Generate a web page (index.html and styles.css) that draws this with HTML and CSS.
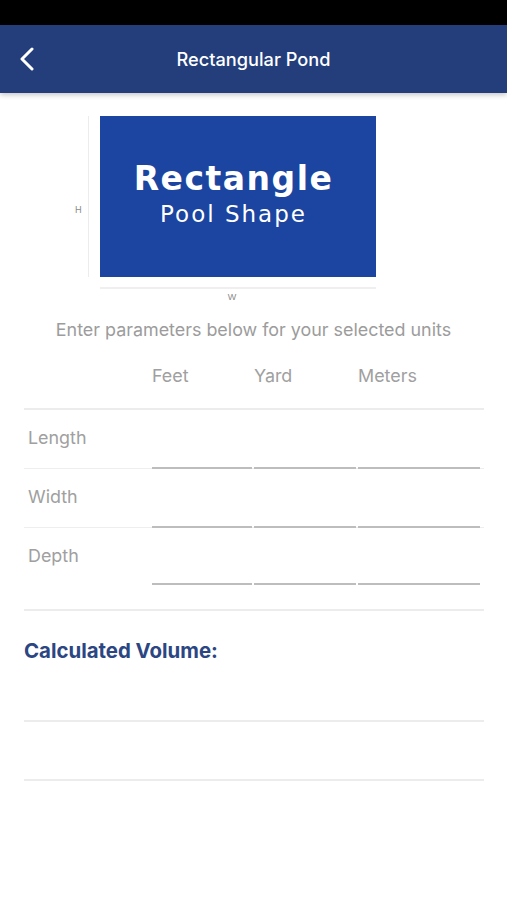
FILE: index.html
```html
<!DOCTYPE html>
<html lang="en">
<head>
<meta charset="utf-8">
<title>Rectangular Pond</title>
<link rel="stylesheet" href="styles.css">
</head>
<body>
<div class="status-bar"></div>
<header class="nav">
  <button class="back" aria-label="Back">
    <svg width="16" height="24" viewBox="0 0 16 24"><path d="M13 2 L3 12 L13 22" fill="none" stroke="#fff" stroke-width="3" stroke-linecap="round" stroke-linejoin="round"/></svg>
  </button>
  <h1 class="nav-title">Rectangular Pond</h1>
</header>

<section class="figure">
  <div class="h-axis"><span>H</span></div>
  <div class="v-line"></div>
  <div class="shape">
    <div class="shape-title">Rectangle</div>
    <div class="shape-sub">Pool Shape</div>
  </div>
  <div class="w-axis">
    <div class="h-line"></div>
    <span>W</span>
  </div>
</section>

<p class="hint">Enter parameters below for your selected units</p>

<section class="params">
  <div class="units">
    <span></span><span>Feet</span><span>Yard</span><span>Meters</span>
  </div>
  <div class="rows">
    <div class="row">
      <span class="label">Length</span>
      <span class="input"></span><span class="input"></span><span class="input"></span>
    </div>
    <div class="row">
      <span class="label">Width</span>
      <span class="input"></span><span class="input"></span><span class="input"></span>
    </div>
    <div class="row last">
      <span class="label">Depth</span>
      <span class="input"></span><span class="input"></span><span class="input"></span>
    </div>
  </div>
</section>

<section class="result">
  <h2 class="result-title">Calculated Volume:</h2>
  <div class="result-line"></div>
  <div class="result-line"></div>
</section>
</body>
</html>
```

FILE: styles.css
```css
* { box-sizing: border-box; }
html, body { margin: 0; padding: 0; background: #fff; }
body {
  width: 507px;
  font-family: "Inter", "Liberation Sans", sans-serif;
  color: #9a9a9a;
}
.status-bar { height: 25px; background: #000; }
.nav {
  height: 68px;
  background: #233e7b;
  display: flex;
  align-items: center;
  justify-content: center;
  position: relative;
  box-shadow: 0 2px 5px rgba(0,0,0,0.22);
}
.back {
  position: absolute;
  left: 19px;
  top: 22px;
  padding: 0;
  border: 0;
  background: none;
  line-height: 0;
}
.nav-title {
  margin: 0;
  color: #fff;
  font-size: 18.2px;
  font-weight: 500;
}

.figure {
  margin: 23px 0 0 74px;
  display: grid;
  grid-template-columns: 14px 1px 287px;
}
.h-axis {
  display: flex;
  align-items: center;
  font-size: 9px;
  color: #8a8a8a;
  padding-left: 1px;
  padding-top: 26px;
}
.v-line { background: #ececec; width: 1px; }
.shape {
  margin-left: 11px;
  height: 161px;
  background: #1b45a0;
  color: #fff;
  display: flex;
  flex-direction: column;
  align-items: center;
  justify-content: center;
  font-family: "DejaVu Sans", sans-serif;
  padding: 0 9px 6px 0;
}
.shape-title { font-size: 33px; font-weight: 700; line-height: 38px; letter-spacing: 1.5px; }
.shape-sub { font-size: 23px; font-weight: 400; line-height: 28px; margin-top: 2px; letter-spacing: 2px; }
.w-axis {
  grid-column: 3;
  margin-left: 11px;
  display: flex;
  flex-direction: column;
  align-items: center;
  padding-top: 10px;
}
.h-line { width: 100%; height: 2px; background: #efefef; }
.w-axis span { font-size: 9px; color: #8a8a8a; margin-top: 3px; margin-right: 12px; font-family: "Liberation Sans", sans-serif; }

.hint {
  margin: 17px 0 0;
  text-align: center;
  font-size: 17.9px;
  line-height: 21px;
  color: #9c9c9c;
}

.params { margin: 0 23px 0 24px; }
.units, .row {
  display: grid;
  grid-template-columns: 126px 100px 102px 122px;
  column-gap: 2px;
}
.units {
  height: 70px;
  align-items: center;
  font-size: 17.9px;
  color: #a0a0a0;
  padding-top: 2px;
  border-bottom: 2px solid #ececec;
}
.row {
  height: 59px;
  border-bottom: 1px solid #eeeeee;
}
.row.last { height: 83px; border-bottom: 2px solid #ececec; padding-bottom: 24px; }
.label {
  padding: 17px 0 0 4px;
  font-size: 17.9px;
  line-height: 21px;
  color: #a0a0a0;
}
.input { border-bottom: 2px solid #bdbdbd; margin-bottom: -1px; }
.row.last .input { margin-bottom: 0; }

.result { margin: 0 23px 0 24px; }
.result-title {
  margin: 28px 0 0;
  font-size: 20.4px;
  line-height: 23px;
  font-weight: 700;
  color: #2b4682;
}
.result-line { height: 59px; border-bottom: 2px solid #ececec; }
.result-line:first-of-type { height: 60px; }
```
